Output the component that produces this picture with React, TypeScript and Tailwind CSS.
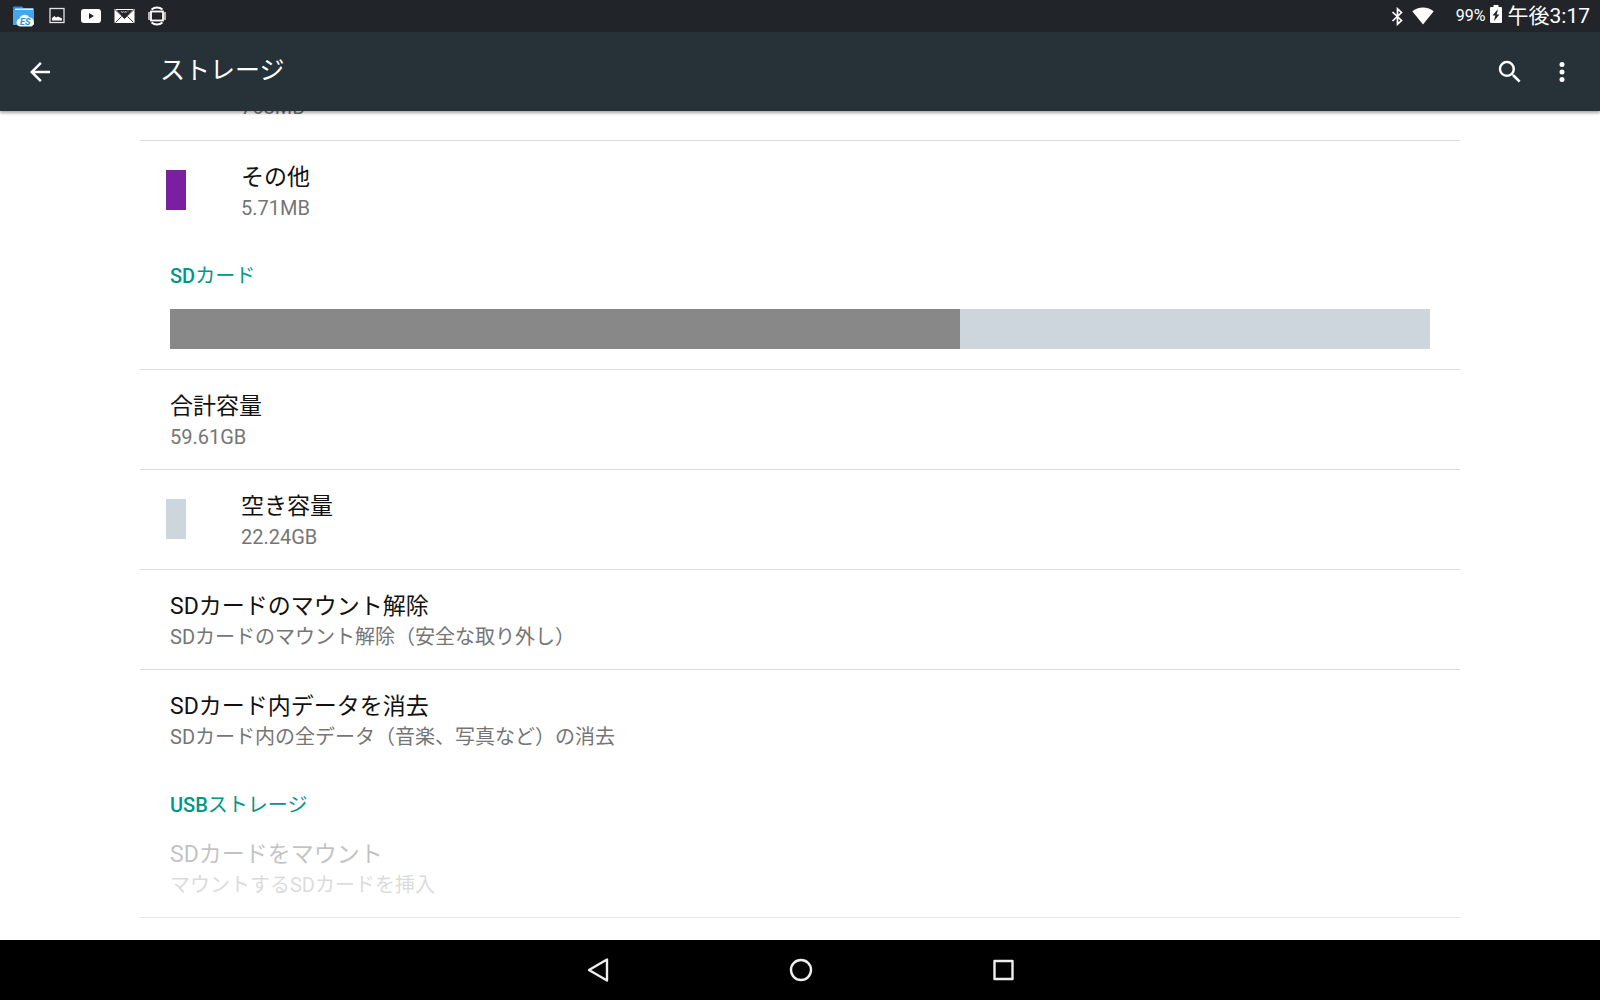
import type { ReactNode } from "react"

type RowProps = {
  title: string
  summary: string
  swatch?: string
  disabled?: boolean
  divider?: boolean
}

function Row({ title, summary, swatch, disabled, divider = true }: RowProps) {
  return (
    <li className={`${divider ? "border-b" : ""} ${disabled ? "border-[#e8e8e8]" : "border-[#dcdcdc]"}`}>
      <button
        type="button"
        disabled={disabled}
        className={`flex w-full items-start pt-[21px] pb-[18px] text-left ${swatch ? "pl-[26px]" : "pl-[30px]"} ${disabled ? "opacity-25" : ""}`}
      >
        {swatch && <span className={`mt-2 mr-[55px] h-10 w-5 ${swatch}`} />}
        <span className="flex flex-col">
          <span className="text-[23px] leading-8 text-[#111111]">{title}</span>
          <span className="text-xl leading-7 text-[#757575]">{summary}</span>
        </span>
      </button>
    </li>
  )
}

function SectionTitle({ latin, children }: { latin: string; children: ReactNode }) {
  return (
    <h2 className="pt-[23px] pl-[30px] text-xl leading-[26px] text-[#009688]">
      <span className="font-medium">{latin}</span>
      {children}
    </h2>
  )
}

function StatusBar() {
  return (
    <div className="flex h-8 items-center justify-between bg-[#212529] pr-[10px] pl-3 text-white">
      <div className="flex items-center">
        {/* file manager */}
        <svg className="mr-3 h-6 w-6" viewBox="0 0 24 24">
          <path d="M2 2.500h8l1.500 1.500H21a1 1 0 0 1 1 1V21H2a1 1 0 0 1-1-1V3.500a1 1 0 0 1 1-1z" fill="#2b8fdc" />
          <path d="M3 4.500h18v2H3z" fill="#d8effc" />
          <path d="M1 6h21v14a1 1 0 0 1-1 1H2a1 1 0 0 1-1-1z" fill="#46a6ec" />
          <path d="M8 22.500a4 4 0 0 1-.5-7.800 5.500 5.500 0 0 1 10-1.200 4.800 4.800 0 0 1 2 9z" fill="#f3f8fc" />
          <text x="8" y="21" fontSize="9" fontWeight="700" fontStyle="italic" fill="#2b8fdc">ES</text>
        </svg>
        {/* gallery */}
        <svg className="mr-[15px] h-[18px] w-[18px]" viewBox="0 0 18 18">
          <rect x="2" y="1.500" width="14" height="14" fill="none" stroke="#e3e5e6" strokeWidth="1.300" />
          <path d="M4 13.500V11l2.500-2 1.500 1.500L10 9.500l4 2v2z" fill="#fff" />
        </svg>
        {/* video */}
        <svg className="mr-[13px] h-[14px] w-5" viewBox="0 0 20 14">
          <rect width="20" height="14" rx="3" fill="#fff" />
          <path d="M8 4l5 3-5 3z" fill="#212529" />
        </svg>
        {/* mail */}
        <svg className="mr-[13px] h-[14px] w-[21px]" viewBox="0 0 21 14">
          <rect x=".5" y="0" width="20" height="14" fill="#fff" />
          <path d="M2.500 1h16l-8 8.500z" fill="#212529" />
          <path d="M1 .5l9.500 9 9.500-9M1.500 13.500l6-6M19.500 13.500l-6-6" fill="none" stroke="#212529" strokeWidth=".9" />
          <path d="M7 2l1.500 2 1-2M10.500 4l1-2 1 2M13.500 2h1" stroke="#c9cbcc" strokeWidth=".8" fill="none" />
        </svg>
        {/* rotation */}
        <svg className="h-5 w-[18px]" viewBox="0 0 18 20">
          <rect x="3" y="5.500" width="12" height="9" fill="none" stroke="#fff" strokeWidth="1.800" />
          <path d="M3.500 3.500a8.500 8.500 0 0 1 11 0M3.500 16.500a8.500 8.500 0 0 0 11 0" fill="none" stroke="#fff" strokeWidth="1.800" />
          <path d="M1 6v8M17 6v8" stroke="#fff" strokeWidth="1.300" />
        </svg>
      </div>
      <div className="flex items-center">
        <svg className="mr-2 h-[19px] w-[13px]" viewBox="0 0 13 19" fill="none" stroke="#fff" strokeWidth="1.700">
          <path d="M1.500 5l9 8.500L6.500 17.200V1.800L10.500 5.500l-9 8.500" />
        </svg>
        <svg className="mr-[22px] h-[18px] w-[22px]" viewBox="0 0 22 18">
          <path d="M11 17.500L.3 4.200C3.200 1.900 6.900.5 11 .5s7.800 1.400 10.700 3.700z" fill="#fff" />
        </svg>
        <span className="mr-1 text-base">99%</span>
        <svg className="mr-1.5 mb-1 h-[18px] w-3" viewBox="0 0 12 18">
          <path d="M3.500 0h5v2H11a1 1 0 0 1 1 1v14a1 1 0 0 1-1 1H1a1 1 0 0 1-1-1V3a1 1 0 0 1 1-1h2.500z" fill="#fff" />
          <path d="M8 4L2.500 10.500h2.800L4 16l5.500-6.500H6.700z" fill="#212529" />
        </svg>
        <time className="text-[21px] leading-8">午後3:17</time>
      </div>
    </div>
  )
}

export default function App() {
  return (
    <div className="flex min-h-screen flex-col bg-white font-[Roboto,'Noto_Sans_CJK_JP',sans-serif]">
      <header className="sticky top-0 z-10 shadow-[0_2px_3px_rgba(0,0,0,0.35)]">
        <StatusBar />
        <div className="flex h-[79px] items-center bg-[#263238] pr-[23px] pl-[25px] text-white">
          <button type="button" aria-label="戻る">
            <svg className="h-[30px] w-[30px]" viewBox="0 0 24 24" fill="currentColor">
              <path d="M20 11H7.830l5.590-5.590L12 4l-8 8 8 8 1.410-1.410L7.830 13H20v-2z" />
            </svg>
          </button>
          <h1 className="ml-[105px] flex-1 pb-0.5 text-[25px] leading-8">ストレージ</h1>
          <button type="button" aria-label="検索" className="mr-[22px]">
            <svg className="h-[30px] w-[30px]" viewBox="0 0 24 24" fill="currentColor">
              <path d="M15.500 14h-.79l-.28-.27A6.471 6.471 0 0 0 16 9.500 6.500 6.500 0 1 0 9.500 16c1.610 0 3.090-.59 4.230-1.570l.27.28v.79l5 4.990L20.490 19l-4.990-5zm-6 0C7.010 14 5 11.990 5 9.500S7.010 5 9.500 5 14 7.010 14 9.500 11.990 14 9.500 14z" />
            </svg>
          </button>
          <button type="button" aria-label="その他のオプション">
            <svg className="h-[30px] w-[30px]" viewBox="0 0 24 24" fill="currentColor">
              <circle cx="12" cy="6" r="2" />
              <circle cx="12" cy="12" r="2" />
              <circle cx="12" cy="18" r="2" />
            </svg>
          </button>
        </div>
      </header>

      {/* the list is scrolled, so only the end of its first row shows below the header */}
      <main className="-mt-[18px] flex-1 px-[140px]">
        <ul>
          <li className="border-b border-[#dcdcdc] pb-[19px] pl-[101px] text-xl leading-7 text-[#757575]">768MB</li>
          <Row title="その他" summary="5.71MB" swatch="bg-[#7b1fa2]" divider={false} />
        </ul>

        <SectionTitle latin="SD">カード</SectionTitle>
        <div className="border-b border-[#dcdcdc] px-[30px] py-5">
          <div className="flex h-10 bg-[#cdd6dc]">
            <div className="w-[62.7%] bg-[#888888]" />
          </div>
        </div>
        <ul>
          <Row title="合計容量" summary="59.61GB" />
          <Row title="空き容量" summary="22.24GB" swatch="bg-[#cdd6dc]" />
          <Row title="SDカードのマウント解除" summary="SDカードのマウント解除（安全な取り外し）" />
          <Row title="SDカード内データを消去" summary="SDカード内の全データ（音楽、写真など）の消去" divider={false} />
        </ul>

        <SectionTitle latin="USB">ストレージ</SectionTitle>
        <ul>
          <Row title="SDカードをマウント" summary="マウントするSDカードを挿入" disabled />
        </ul>
      </main>

      <nav className="sticky bottom-0 flex h-[60px] justify-center bg-black text-[#eeeeee]">
        <button type="button" aria-label="戻る" className="flex w-[202px] items-center justify-center">
          <svg className="h-7 w-7" viewBox="0 0 28 28" fill="none" stroke="currentColor" strokeWidth="2.400" strokeLinejoin="round">
            <path d="M5 14L23 3.500v21z" />
          </svg>
        </button>
        <button type="button" aria-label="ホーム" className="flex w-[202px] items-center justify-center">
          <svg className="h-7 w-7" viewBox="0 0 28 28" fill="none" stroke="currentColor" strokeWidth="2.400">
            <circle cx="15" cy="14" r="10" />
          </svg>
        </button>
        <button type="button" aria-label="最近使ったアプリ" className="flex w-[202px] items-center justify-center">
          <svg className="h-7 w-7" viewBox="0 0 28 28" fill="none" stroke="currentColor" strokeWidth="2.400" strokeLinejoin="round">
            <rect x="6.500" y="5" width="18" height="18" />
          </svg>
        </button>
      </nav>
    </div>
  )
}
